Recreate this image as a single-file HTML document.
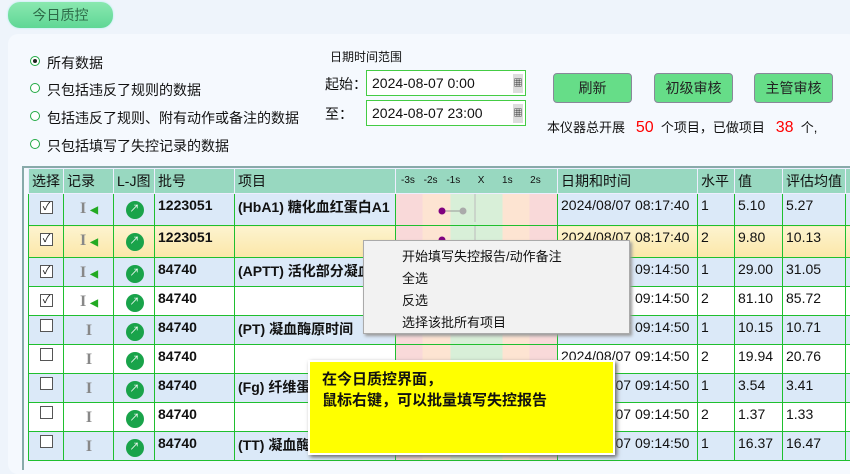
<!DOCTYPE html>
<html><head><meta charset="utf-8">
<style>
*{margin:0;padding:0;box-sizing:border-box}
body{width:850px;height:470px;overflow:hidden;background:#eef4fb;font-family:"Liberation Sans","Noto Sans CJK SC",sans-serif;position:relative;color:#111}
.abs{position:absolute}
.tab{left:8px;top:2px;width:105px;height:26px;border-radius:12px;background:linear-gradient(#8ae8b0,#5fd795);color:#2d6b48;font-size:14px;text-align:center;line-height:26px;box-shadow:0 0 2px #aee}
.panel{left:8px;top:34px;width:850px;height:440px;background:#f5f9fe;border-radius:10px}
.radio{width:10px;height:10px;border:1px solid #22aa44;border-radius:50%;background:#fff}
.rl{font-size:14px}
.inp{background:#fff;border:1px solid #4c4;font-size:14px;line-height:24px;padding-left:5px;width:160px;height:26px}
.inp i{position:absolute;right:2px;top:3px;width:10px;height:19px;background:#ddd;font-style:normal;font-size:9px;line-height:19px;text-align:center}
.btn{width:79px;height:30px;background:#66dd88;border:1px solid #889;border-radius:4px;text-align:center;line-height:28px;font-size:14px;color:#222}
table{position:absolute;left:28px;top:168px;width:837px;border-collapse:collapse;table-layout:fixed;font-size:14px}
td,th{border:1px solid #1fbf2f;vertical-align:top;padding:0;white-space:nowrap;overflow:hidden}
td>div{height:28px;padding:3px 2px 0 3px;overflow:hidden;position:relative}
th{background:#98d8c0;border-color:#eef;font-weight:normal;text-align:left;vertical-align:middle;padding:0 3px;font-size:14px}
th>div{height:24px;line-height:24px}
tr.b td{background:#dbe9f8}
tr.y td{background:linear-gradient(#fdf3cf,#fbe7a8)}
tr.w td{background:#fff}
td.c>div{text-align:center}
.cb{display:inline-block;width:13px;height:13px;border:1px solid #555;background:#fff;font-size:11px;line-height:11px;text-align:center}
.lj{display:inline-block;width:18px;height:18px;border-radius:50%;background:#19a34a;color:#fff;font-size:10px;line-height:18px;margin-top:4px}
.rec{color:#888;font-weight:bold;margin-top:3px;display:inline-block;font-family:"Liberation Serif",serif;font-size:16px}
.rec span{color:#2a2;font-size:10px;font-family:"Liberation Sans",sans-serif}
.num{font-weight:bold}
td.ch{padding:0;background:linear-gradient(90deg,#f9d9d9 0 26px,#fde4d2 26px 54px,#d8efd8 54px 106px,#fde4d2 106px 133px,#f9d9d9 133px)!important}
.menu{left:363px;top:240px;width:267px;height:94px;background:#f2f2f2;border:1px solid #aaa;box-shadow:2px 2px 3px #999;font-size:13px}
.menu div{position:absolute;left:38px}
.yb{left:308px;top:360px;width:307px;height:95px;background:#ffff00;border:2px solid #fff;box-shadow:2px 2px 4px #666;font-weight:bold;font-size:15px;padding:7px 12px;line-height:21px}
</style></head><body>
<div class="abs tab">今日质控</div>
<div class="abs panel"></div>
<div class="abs radio" style="left:30px;top:56px;"><div style="width:4px;height:4px;background:#222;border-radius:50%;margin:2px"></div></div>
<div class="abs rl" style="left:47px;top:53px">所有数据</div>
<div class="abs radio" style="left:30px;top:83px"></div><div class="abs rl" style="left:47px;top:80px">只包括违反了规则的数据</div>
<div class="abs radio" style="left:30px;top:111px"></div><div class="abs rl" style="left:47px;top:108px">包括违反了规则、附有动作或备注的数据</div>
<div class="abs radio" style="left:30px;top:139px"></div><div class="abs rl" style="left:47px;top:136px">只包括填写了失控记录的数据</div>
<div class="abs" style="left:330px;top:48px;font-size:12px">日期时间范围</div>
<div class="abs rl" style="left:325px;top:74px">起始：</div>
<div class="abs rl" style="left:325px;top:104px">至：</div>
<div class="abs inp" style="left:366px;top:70px">2024-08-07 0:00<i>▦</i></div>
<div class="abs inp" style="left:366px;top:100px">2024-08-07 23:00<i>▦</i></div>
<div class="abs btn" style="left:553px;top:73px">刷新</div>
<div class="abs btn" style="left:654px;top:73px">初级审核</div>
<div class="abs btn" style="left:754px;top:73px">主管审核</div>
<div class="abs" style="left:547px;top:117px;font-size:13px;white-space:nowrap">本仪器总开展 &nbsp;&nbsp;<b style="color:#f00;font-size:16px;font-weight:normal">50</b> &nbsp;个项目，已做项目 &nbsp;&nbsp;<b style="color:#f00;font-size:16px;font-weight:normal">38</b> &nbsp;个,</div>
<div class="abs" style="left:22px;top:166px;width:830px;height:304px;border-left:2px solid #8aa;border-top:2px solid #8aa"></div>
<table>
<colgroup><col style="width:35px"><col style="width:50px"><col style="width:41px"><col style="width:80px"><col style="width:161px"><col style="width:162px"><col style="width:140px"><col style="width:37px"><col style="width:48px"><col style="width:63px"><col style="width:20px"></colgroup>
<tr><th><div>选择</div></th><th><div>记录</div></th><th><div>L-J图</div></th><th><div>批号</div></th><th><div>项目</div></th><th style="font-size:10px;padding-left:5px;word-spacing:6px"><div>-3s -2s -1s &nbsp;X &nbsp;1s &nbsp;2s</div></th><th><div>日期和时间</div></th><th><div>水平</div></th><th><div>值</div></th><th><div>评估均值</div></th><th><div></div></th></tr>
<tr class="b"><td class="c"><div><span class="cb">✓</span></div></td><td class="c"><div><span class="rec">I <span>◀</span></span></div></td><td class="c"><div><span class="lj">↗</span></div></td><td class="num"><div>1223051</div></td><td class="num"><div>(HbA1) 糖化血红蛋白A1</div></td><td class="ch"><svg width="162" height="28"><line x1="79" y1="0" x2="79" y2="30" stroke="#bbb"/><line x1="46" y1="17" x2="67" y2="17" stroke="#999"/><circle cx="46" cy="17" r="3.5" fill="#800080"/><circle cx="67" cy="17" r="3.5" fill="#aaa"/></svg></td><td><div>2024/08/07 08:17:40</div></td><td><div>1</div></td><td><div>5.10</div></td><td><div>5.27</div></td><td><div></div></td></tr>
<tr class="y"><td class="c"><div><span class="cb">✓</span></div></td><td class="c"><div><span class="rec">I <span>◀</span></span></div></td><td class="c"><div><span class="lj">↗</span></div></td><td class="num"><div>1223051</div></td><td><div></div></td><td class="ch"><svg width="162" height="28"><line x1="79" y1="0" x2="79" y2="30" stroke="#bbb"/><circle cx="46" cy="14" r="3.5" fill="#800080"/></svg></td><td><div>2024/08/07 08:17:40</div></td><td><div>2</div></td><td><div>9.80</div></td><td><div>10.13</div></td><td><div></div></td></tr>
<tr class="b"><td class="c"><div><span class="cb">✓</span></div></td><td class="c"><div><span class="rec">I <span>◀</span></span></div></td><td class="c"><div><span class="lj">↗</span></div></td><td class="num"><div>84740</div></td><td class="num"><div>(APTT) 活化部分凝血</div></td><td class="ch"><div></div></td><td><div>2024/08/07 09:14:50</div></td><td><div>1</div></td><td><div>29.00</div></td><td><div>31.05</div></td><td><div></div></td></tr>
<tr class="w"><td class="c"><div><span class="cb">✓</span></div></td><td class="c"><div><span class="rec">I <span>◀</span></span></div></td><td class="c"><div><span class="lj">↗</span></div></td><td class="num"><div>84740</div></td><td><div></div></td><td class="ch"><div></div></td><td><div>2024/08/07 09:14:50</div></td><td><div>2</div></td><td><div>81.10</div></td><td><div>85.72</div></td><td><div></div></td></tr>
<tr class="b"><td class="c"><div><span class="cb"></span></div></td><td class="c"><div><span class="rec">I</span></div></td><td class="c"><div><span class="lj">↗</span></div></td><td class="num"><div>84740</div></td><td class="num"><div>(PT) 凝血酶原时间</div></td><td class="ch"><div></div></td><td><div>2024/08/07 09:14:50</div></td><td><div>1</div></td><td><div>10.15</div></td><td><div>10.71</div></td><td><div></div></td></tr>
<tr class="w"><td class="c"><div><span class="cb"></span></div></td><td class="c"><div><span class="rec">I</span></div></td><td class="c"><div><span class="lj">↗</span></div></td><td class="num"><div>84740</div></td><td><div></div></td><td class="ch"><div></div></td><td><div>2024/08/07 09:14:50</div></td><td><div>2</div></td><td><div>19.94</div></td><td><div>20.76</div></td><td><div></div></td></tr>
<tr class="b"><td class="c"><div><span class="cb"></span></div></td><td class="c"><div><span class="rec">I</span></div></td><td class="c"><div><span class="lj">↗</span></div></td><td class="num"><div>84740</div></td><td class="num"><div>(Fg) 纤维蛋白原</div></td><td class="ch"><div></div></td><td><div>2024/08/07 09:14:50</div></td><td><div>1</div></td><td><div>3.54</div></td><td><div>3.41</div></td><td><div></div></td></tr>
<tr class="w"><td class="c"><div><span class="cb"></span></div></td><td class="c"><div><span class="rec">I</span></div></td><td class="c"><div><span class="lj">↗</span></div></td><td class="num"><div>84740</div></td><td><div></div></td><td class="ch"><div></div></td><td><div>2024/08/07 09:14:50</div></td><td><div>2</div></td><td><div>1.37</div></td><td><div>1.33</div></td><td><div></div></td></tr>
<tr class="b"><td class="c"><div><span class="cb"></span></div></td><td class="c"><div><span class="rec">I</span></div></td><td class="c"><div><span class="lj">↗</span></div></td><td class="num"><div>84740</div></td><td class="num"><div>(TT) 凝血酶时间</div></td><td class="ch"><div></div></td><td><div>2024/08/07 09:14:50</div></td><td><div>1</div></td><td><div>16.37</div></td><td><div>16.47</div></td><td><div></div></td></tr>
</table>
<div class="abs menu">
<div style="top:5px">开始填写失控报告/动作备注</div>
<div style="top:27px">全选</div>
<div style="top:49px">反选</div>
<div style="top:71px">选择该批所有项目</div>
</div>
<div class="abs yb">在今日质控界面，<br>鼠标右键，可以批量填写失控报告</div>
</body></html>
